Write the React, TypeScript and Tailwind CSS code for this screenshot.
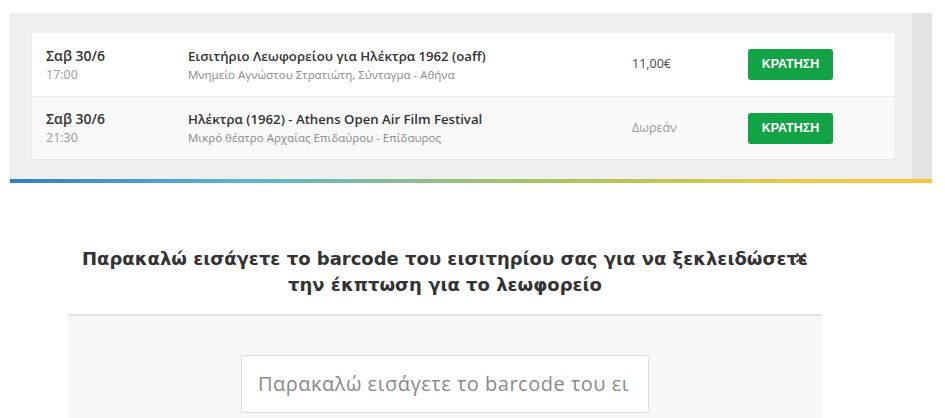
import React from "react";

type Row = { day: string; time: string; title: string; place: string; price: string; free?: boolean };

const rows: Row[] = [
  { day: "Σαβ 30/6", time: "17:00", title: "Εισιτήριο Λεωφορείου για Ηλέκτρα 1962 (oaff)", place: "Μνημείο Αγνώστου Στρατιώτη, Σύνταγμα - Αθήνα", price: "11,00€" },
  { day: "Σαβ 30/6", time: "21:30", title: "Ηλέκτρα (1962) - Athens Open Air Film Festival", place: "Μικρό θέατρο Αρχαίας Επιδαύρου - Επίδαυρος", price: "Δωρεάν", free: true },
];

export default function App() {
  return (
    <div className="h-[418px] w-[945px] overflow-hidden bg-white font-['Open_Sans',sans-serif]">
      <div className="ml-[10px] mt-[13px] w-[922px]">
        <div className="flex bg-[#efefef]">
          <div className="flex-1 pb-[20px] pl-[22px] pr-[17px] pt-[20px]">
            <div className="bg-white shadow-[0_1px_2px_rgba(0,0,0,0.06)]">
              {rows.map((r, i) => (
                <div key={i} className={`flex h-[63px] items-center ${i ? "border-t border-[#ececec] bg-[#f9f9f9]" : ""}`}>
                  <div className="w-[156px] pl-[14px]">
                    <div className="text-[14px] font-semibold leading-[20px] text-[#333]">{r.day}</div>
                    <div className="text-[12.5px] leading-[18px] text-[#999]">{r.time}</div>
                  </div>
                  <div className="w-[444px]">
                    <div className="text-[13.2px] font-semibold leading-[20px] text-[#333]">{r.title}</div>
                    <div className="text-[11.5px] leading-[18px] text-[#888]">{r.place}</div>
                  </div>
                  <div className={`w-[116px] text-[12.5px] ${r.free ? "text-[#999]" : "text-[#444]"}`}>{r.price}</div>
                  <button className="flex h-[31px] w-[85px] items-center justify-center rounded-[3px] bg-[#12a347] font-['Liberation_Sans',sans-serif] text-[12.5px] font-bold text-white">
                    ΚΡΑΤΗΣΗ
                  </button>
                </div>
              ))}
            </div>
          </div>
          <div className="w-[20px] bg-[#e3e3e3]" />
        </div>
        <div className="h-[4px] bg-[linear-gradient(90deg,#2f82c3_0%,#5ab4d3_25%,#8fbf8a_45%,#a9c45a_60%,#e8c846_85%,#f7c53a_100%)]" />
      </div>

      <div className="ml-[68px] w-[754px]">
        <div className="relative mt-[63px] text-center font-['DejaVu_Sans',sans-serif] text-[18px] font-bold leading-[26px] text-[#333]">
          <div className="whitespace-nowrap">Παρακαλώ εισάγετε το barcode του εισιτηρίου σας για να ξεκλειδώσετε</div>
          <div>την έκπτωση για το λεωφορείο</div>
          <span className="absolute right-[14px] top-[-1px] text-[17px] font-normal text-[#333]">✕</span>
        </div>
        <div className="mt-[16px] h-[120px] border-t-2 border-[#e2e2e2] bg-[#f7f7f7] pt-[39px]">
          <div className="mx-auto flex h-[58px] w-[408px] items-center rounded-[3px] border border-[#dcdcdc] bg-white px-[16px] text-[20px] tracking-[0.5px] text-[#8a8a8a]">
            <span className="whitespace-nowrap overflow-hidden">Παρακαλώ εισάγετε το barcode του ει</span>
          </div>
        </div>
      </div>
    </div>
  );
}
